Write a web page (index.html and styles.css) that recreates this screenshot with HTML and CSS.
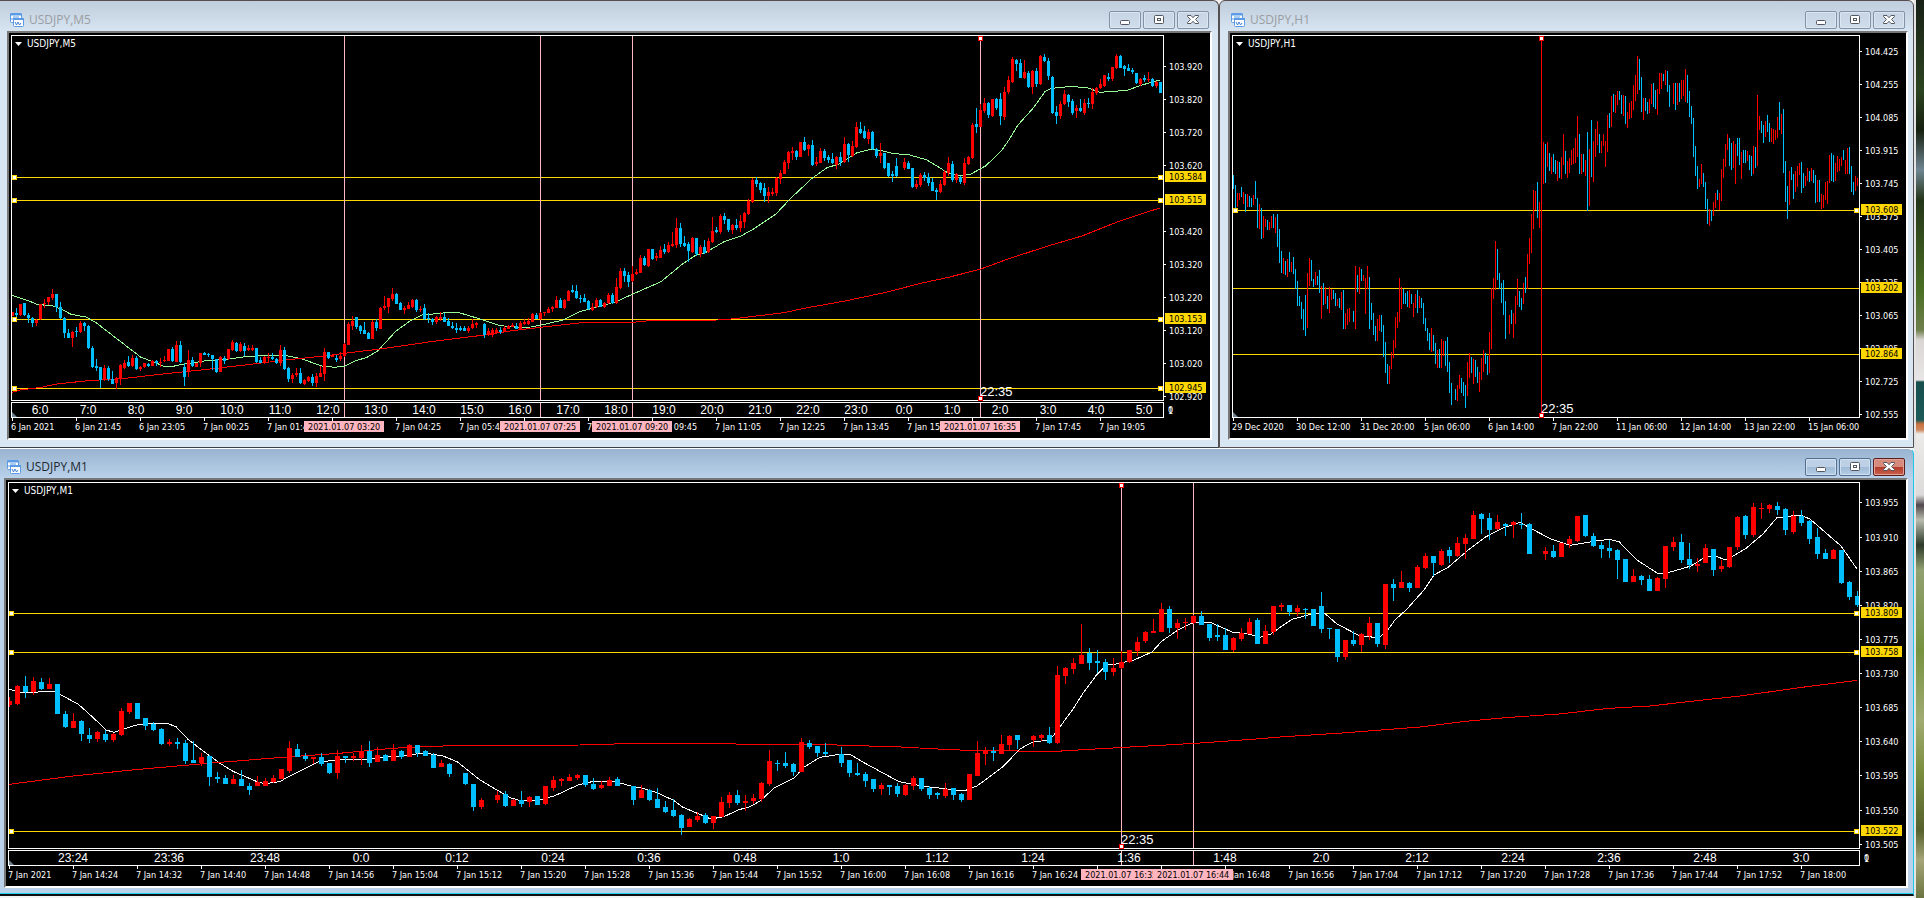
FILE: index.html
```html
<!DOCTYPE html>
<html lang="en">
<head>
<meta charset="utf-8">
<title>USDJPY charts</title>
<link rel="stylesheet" href="styles.css">
</head>
<body>
<svg class="sprite" aria-hidden="true">
  <symbol id="i-chart" viewBox="0 0 16 16">
    <rect x="1.5" y="1.5" width="11" height="9" rx="1" fill="#fff" stroke="#5b9be6"/>
    <path d="M1 2.5h12" stroke="#5b9be6" stroke-width="2"/>
    <path d="M3 8V6M5 7V4M7 6V4M9 6V4" stroke="#5b9be6"/>
    <rect x="4.5" y="6.5" width="10" height="8" rx="1" fill="#fff" stroke="#5b9be6"/>
    <path d="M4 7h11" stroke="#5b9be6" stroke-width="2"/>
    <path d="M6 10l1.500 3 1.500-3 1.500 3 1.500-2" fill="none" stroke="#3f7fd6"/>
  </symbol>
  <symbol id="i-min" viewBox="0 0 12 12">
    <rect x="1.500" y="6.500" width="9" height="4" rx="1" fill="#fff" stroke="#53565f"/>
  </symbol>
  <symbol id="i-max" viewBox="0 0 12 12">
    <rect x="1.500" y="1.500" width="9" height="8" rx="1" fill="#fff" stroke="#53565f"/>
    <rect x="4.500" y="4.500" width="3" height="2" fill="#fff" stroke="#53565f"/>
  </symbol>
  <symbol id="i-close" viewBox="0 0 12 12">
    <path d="M.5 1.500h3.500L6 3.700 8 1.500h3.500v1L8.500 5.500l3 3v1H8L6 7.300 4 9.500H.5v-1l3-3-3-3z" fill="#fff" stroke="#53565f"/>
  </symbol>
</svg>
<div class="desktop">
  <main class="workspace">
    <section class="window window-m5" aria-label="USDJPY,M5">
      <header class="titlebar">
        <svg class="app-icon" aria-hidden="true"><use href="#i-chart"/></svg>
        <h2 class="title">USDJPY,M5</h2>
        <button class="win-btn" type="button" aria-label="Minimize"><svg class="glyph"><use href="#i-min"/></svg></button>
        <button class="win-btn" type="button" aria-label="Maximize"><svg class="glyph"><use href="#i-max"/></svg></button>
        <button class="win-btn" type="button" aria-label="Close"><svg class="glyph"><use href="#i-close"/></svg></button>
      </header>
      <div class="chart-frame"><svg class="chart" id="m5" role="img" aria-label="USDJPY five minute chart"></svg></div>
    </section>
    <section class="window window-h1" aria-label="USDJPY,H1">
      <header class="titlebar">
        <svg class="app-icon" aria-hidden="true"><use href="#i-chart"/></svg>
        <h2 class="title">USDJPY,H1</h2>
        <button class="win-btn" type="button" aria-label="Minimize"><svg class="glyph"><use href="#i-min"/></svg></button>
        <button class="win-btn" type="button" aria-label="Maximize"><svg class="glyph"><use href="#i-max"/></svg></button>
        <button class="win-btn" type="button" aria-label="Close"><svg class="glyph"><use href="#i-close"/></svg></button>
      </header>
      <div class="chart-frame"><svg class="chart" id="h1" role="img" aria-label="USDJPY hourly chart"></svg></div>
    </section>
    <section class="window window-m1 active" aria-label="USDJPY,M1">
      <header class="titlebar">
        <svg class="app-icon" aria-hidden="true"><use href="#i-chart"/></svg>
        <h2 class="title">USDJPY,M1</h2>
        <button class="win-btn" type="button" aria-label="Minimize"><svg class="glyph"><use href="#i-min"/></svg></button>
        <button class="win-btn" type="button" aria-label="Maximize"><svg class="glyph"><use href="#i-max"/></svg></button>
        <button class="win-btn win-close" type="button" aria-label="Close"><svg class="glyph"><use href="#i-close"/></svg></button>
      </header>
      <div class="chart-frame"><svg class="chart" id="m1" role="img" aria-label="USDJPY one minute chart"></svg></div>
    </section>
  </main>
  <aside class="wallpaper" aria-hidden="true"></aside>
</div>
<script src="charts.js"></script>
</body>
</html>
```
FILE: styles.css
```css
* { box-sizing: border-box; }

body {
  margin: 0;
  background: #f4f4f4;
  font-family: "Open Sans", "Noto Sans", sans-serif;
}

.sprite { position: absolute; width: 0; height: 0; }

.desktop {
  display: grid;
  grid-template-columns: 1fr 10px;
  height: 100vh;
  min-height: 480px;
}

.workspace {
  display: grid;
  grid-template-columns: 1219fr 695fr;
  grid-template-rows: 1fr 1fr;
  min-width: 0;
  padding-bottom: 2px;
}

.window {
  display: flex;
  flex-direction: column;
  min-width: 0;
  min-height: 0;
  border-top: 1px solid #55504f;
  border-bottom: 1px solid #3a3f45;
  background: linear-gradient(#bfcddc, #d8e5f2 31px);
}

.window-m5 {
  padding: 0 6px 7px 7px;
  border-right: 1px solid #55504f;
  border-radius: 0 6px 0 0;
}

.window-h1 {
  padding: 0 5px 7px 8px;
  border: 1px solid #55504f;
  border-radius: 6px 6px 0 0;
}

.window-m1 {
  grid-column: 1 / -1;
  padding: 0 5px 6px 4px;
  border-top-color: #fff;
  border-right: 1px solid #20c8e8;
  border-bottom: 2px solid #111;
  border-radius: 0 6px 0 0;
  box-shadow: inset 0 -1px #20d0f0;
  background: linear-gradient(#99b4d1, #b9d1ea 29px);
}

.titlebar {
  display: flex;
  flex: none;
  align-items: center;
  gap: 2px;
  height: 30px;
  padding: 7px 3px 0 2px;
}

.window-m1 .titlebar { height: 29px; padding-top: 6px; }

.app-icon { flex: none; width: 16px; height: 16px; }

.title {
  flex: 1;
  margin: 0 0 0 2px;
  font-size: 12px;
  line-height: 16px;
  font-weight: 400;
  color: #9a9da1;
}

.active .title { color: #23282e; }

.win-btn {
  display: flex;
  align-items: center;
  justify-content: center;
  width: 32px;
  height: 18px;
  padding: 0;
  border: 1px solid #8391a7;
  border-radius: 2px;
  box-shadow: inset 0 0 0 1px #dbe6f1;
  background: linear-gradient(#c6d4e3, #cfdceb);
}

.active .win-btn {
  border-color: #55708f;
  box-shadow: inset 0 0 0 1px #cfe0f1;
  background: linear-gradient(#bdd0e5 50%, #9fbad6 50%, #b4cde6);
}

.active .win-close {
  border-color: #5a1f1c;
  box-shadow: inset 0 0 0 1px #e2a196;
  background: linear-gradient(#d58a7c 50%, #b3392b 50%, #c9614c);
}

.glyph { width: 12px; height: 12px; }

.chart-frame {
  flex: 1;
  min-height: 0;
  border: 2px solid #fff;
  border-top-color: #777;
  border-left-color: #777;
  background: #000;
}

.chart { display: block; width: 100%; height: 100%; }

.chart text { font: 9px "DejaVu Sans Condensed", "Noto Sans", sans-serif; fill: #fff; }
.chart .name { font-size: 10px; }
.chart .on-tag { fill: #000; }
.chart .hour { font: 12px "Liberation Sans", Arial, sans-serif; text-anchor: middle; }
.chart .clock { font: 13px "Liberation Sans", Arial, sans-serif; }

.wallpaper {
  border-left: 2px solid #e4e4e4;
  background: linear-gradient(#182016, #2c4420 90px, #16200f 130px, #6f8693 170px, #243518 200px, #4a6f24 290px, #6f7f4c 330px, #d9d6d4 340px, #e8e6e6 380px, #174f4d 382px, #1c5a58 420px, #c9713d 424px, #d08a60 430px, #ecebe9 434px, #dcdada 495px, #50474c 505px, #b9bcae 520px, #2c3a2a 545px, #91a070 570px, #76923f 650px, #a0ab72 720px, #7c8f3f 770px, #55602c 830px, #a5a578 860px, #6b7440);
}
```
FILE: charts.js
```js
// Candle rows: direction, high, body top, body bottom, low ("-" is a missing bar).
// H1 rows hold only high and low. Values are in thirds of a pixel from `top`.
const M5_BARS = `r 937 937 948 948,b 925 940 945 950,r 912 912 945 948,b 908 910 944 948,b 940 944 955 968,b 950 953 970 980,r 958 960 970 977,r 911 911 957 960,r 897 908 913 925,r 890 891 907 915,r 867 882 895 900,b 882 882 922 935,b 905 920 955 957,b 952 955 998 1013,b 987 998 1013 1013,r 993 997 1013 1040,b 980 992 997 1010,r 963 970 997 1000,b 966 970 977 992,b 975 977 1045 1047,b 1038 1043 1100 1103,b 1077 1098 1104 1112,b 1100 1101 1141 1165,r 1095 1104 1138 1142,b 1098 1104 1138 1143,b 1113 1137 1151 1152,r 1132 1135 1150 1168,r 1092 1095 1137 1155,r 1080 1090 1103 1107,b 1068 1087 1098 1101,r 1065 1075 1098 1102,b 1068 1073 1107 1110,r 1098 1100 1107 1112,r 1090 1090 1100 1104,b 1088 1092 1098 1100,r 1080 1082 1097 1098,b 1080 1083 1090 1098,r 1075 1085 1090 1100,r 1068 1080 1084 1085,r 1047 1047 1082 1083,b 1040 1047 1082 1085,r 1022 1035 1085 1086,b 1023 1036 1086 1088,b 1090 1101 1131 1158,r 1050 1080 1112 1130,b 1072 1080 1098 1100,r 1088 1088 1100 1102,r 1058 1058 1090 1100,b 1055 1060 1064 1064,b 1060 1062 1066 1072,b 1064 1066 1078 1110,b 1078 1078 1115 1120,r 1068 1071 1115 1116,b 1067 1073 1082 1092,r 1047 1047 1078 1080,r 1020 1027 1050 1053,b 1025 1028 1052 1056,r 1027 1033 1052 1056,b 1030 1037 1052 1068,r 1035 1045 1050 1053,r 1035 1043 1050 1053,b 1043 1045 1087 1088,b 1070 1080 1088 1088,r 1068 1071 1090 1091,r 1058 1070 1074 1090,b 1060 1072 1077 1080,b 1073 1076 1088 1091,r 1035 1050 1090 1098,b 1040 1050 1107 1110,b 1101 1104 1137 1145,r 1120 1124 1137 1148,r 1105 1118 1126 1130,b 1105 1119 1148 1152,r 1137 1140 1153 1155,r 1127 1131 1143 1145,b 1122 1132 1148 1157,r 1120 1127 1148 1161,r 1098 1119 1130 1132,r 1044 1056 1122 1143,b 1055 1056 1073 1078,r 1063 1066 1070 1070,b 1065 1074 1080 1087,r 1055 1068 1078 1083,r 1030 1032 1068 1072,r 967 971 1034 1036,r 948 962 978 990,b 950 951 980 988,b 975 978 992 1003,b 965 990 1003 1003,b 995 999 1016 1017,r 960 965 1017 1017,b 958 967 985 992,r 920 924 987 988,r 888 918 923 930,r 893 895 921 940,r 863 882 897 903,b 879 882 911 912,b 905 909 930 931,r 918 924 930 942,r 905 915 926 927,r 898 900 921 925,b 898 900 930 937,r 918 927 930 935,b 912 924 957 960,b 940 953 958 968,b 953 956 967 975,r 947 951 967 972,r 935 950 957 963,b 940 950 965 967,b 955 963 978 979,b 965 977 985 988,b 970 983 990 1000,b 978 985 991 993,b 978 985 993 993,r 978 984 993 998,r 958 971 985 987,r 965 968 975 985,-,b 970 972 1005 1015,r 984 992 1004 1008,r 985 990 1005 1010,r 983 990 998 1002,b 980 990 995 1003,r 978 983 995 996,r 975 978 986 988,r 970 974 980 982,b 970 978 986 988,r 963 968 988 990,r 957 966 972 976,r 953 963 972 975,r 940 942 965 966,b 938 945 957 958,r 937 940 957 960,r 935 936 940 948,r 920 926 938 940,r 918 922 928 935,r 888 899 923 925,b 895 900 923 925,r 898 900 924 926,r 870 873 902 904,b 855 870 876 880,b 855 872 894 897,b 885 893 898 910,b 882 895 905 907,b 900 903 928 930,r 908 920 930 932,r 893 900 922 925,b 898 900 920 922,r 905 908 920 923,r 880 884 910 913,b 880 885 908 912,r 835 862 908 912,r 803 813 865 867,b 803 813 828 845,b 815 825 845 860,r 797 822 843 845,r 807 815 822 825,r 765 773 818 820,b 767 773 796 797,r 746 746 797 802,b 747 747 777 780,r 758 768 774 783,r 737 750 773 773,b 733 748 755 762,r 725 735 755 758,r 697 732 738 742,r 653 683 735 745,b 668 683 731 742,b 707 730 737 740,b 725 733 753 785,r 710 715 755 760,b 713 715 762 767,r 735 741 763 770,b 720 740 758 763,r 713 723 757 758,r 651 692 726 730,b 680 689 697 700,r 642 648 697 702,b 638 648 660 672,b 657 657 690 697,r 671 676 690 702,b 657 675 685 690,r 645 663 685 695,r 635 640 665 685,r 598 602 641 645,r 535 540 607 608,b 530 540 553 560,b 545 548 570 578,b 550 565 588 607,r 562 577 588 608,r 565 577 583 588,r 530 535 580 587,r 510 518 538 551,r 480 487 521 523,r 453 457 489 508,r 442 454 460 480,b 451 454 470 480,r 425 427 470 472,b 410 427 451 453,r 432 435 447 467,b 420 435 494 497,r 470 486 493 498,r 445 453 490 490,b 448 454 474 482,b 465 472 480 490,b 460 477 490 493,r 468 471 495 508,b 455 470 485 497,r 411 432 485 488,b 428 432 465 485,r 423 437 467 472,r 365 382 440 445,b 367 387 400 402,b 378 392 415 418,r 388 395 417 431,b 393 395 448 450,b 445 448 468 475,r 428 460 468 488,b 458 460 505 507,b 488 490 527 532,b 513 522 528 545,b 475 497 527 530,-,r 473 486 503 510,b 483 489 507 508,b 503 505 562 565,r 540 552 562 567,r 520 525 555 560,b 515 525 535 542,b 520 530 548 558,b 535 547 572 573,b 563 570 575 600,r 540 552 577 578,r 510 517 555 558,r 470 490 520 527,b 483 492 540 547,r 518 522 540 550,b 528 530 547 552,r 475 490 548 555,r 467 471 493 495,r 368 376 473 478,b 323 372 380 398,r 311 330 381 382,r 293 308 332 340,b 305 310 345 353,r 297 297 347 352,b 293 297 323 330,b 280 298 348 375,r 262 275 350 360,r 227 240 275 282,r 172 178 245 250,b 177 180 192 213,b 178 188 233 235,r 180 217 235 237,b 212 218 262 263,r 210 212 262 282,b 203 213 252 262,r 165 168 253 255,b 162 170 183 187,b 173 182 228 240,b 227 230 340 342,b 318 335 348 372,r 302 312 348 358,r 270 283 312 315,b 283 285 305 320,b 297 303 338 345,r 315 323 333 353,b 297 323 333 337,r 298 310 340 345,b 293 308 313 325,r 265 277 312 328,r 260 264 280 285,r 237 253 264 267,r 225 225 258 262,b 218 230 237 242,r 200 202 237 242,r 162 168 205 207,b 165 168 203 205,b 195 198 206 228,b 192 203 213 213,b 203 210 215 223,b 218 220 250 252,r 235 237 252 257,b 225 235 240 245,r 215 237 240 245,b 235 237 257 262,r 243 247 258 264,b 245 246 278 280`;

const M1_BARS = `r 770 783 795 800,r 735 738 791 795,b 708 738 755 773,r 711 723 756 765,b 715 726 747 750,r 713 732 747 748,b 732 732 822 822,b 813 822 861 864,r 820 843 863 864,b 840 843 882 903,b 865 885 897 908,r 873 876 897 905,b 870 882 900 906,r 880 882 900 905,r 804 813 885 888,r 789 789 816 822,b 789 789 836 837,b 834 835 858 869,b 846 851 869 873,b 865 867 912 915,r 898 906 912 917,b 895 906 912 927,b 900 909 963 971,b 903 960 969 970,r 940 950 969 977,b 946 948 1011 1037,b 995 1011 1017 1028,b 1005 1014 1032 1032,r 1005 1017 1032 1033,b 990 1017 1038 1038,b 1030 1038 1050 1064,r 1008 1026 1037 1039,r 1014 1023 1037 1038,r 1005 1014 1026 1028,r 987 987 1017 1018,r 903 924 993 998,b 912 927 951 951,b 940 948 958 963,r 950 951 958 972,b 940 951 972 977,b 968 969 999 1002,r 930 948 999 1017,b 948 948 954 968,r 940 948 954 962,r 915 933 954 975,b 903 933 969 980,r 920 945 966 967,b 941 945 962 963,r 912 930 963 964,b 930 933 951 957,r 912 915 951 952,b 915 915 938 950,b 930 933 948 949,b 940 945 984 985,r 960 969 981 982,b 970 972 1002 1011,-,b 998 999 1032 1034,b 1032 1032 1102 1112,r 1074 1080 1102 1106,-,r 1053 1065 1080 1088,b 1053 1062 1098 1100,r 1076 1080 1098 1098,b 1053 1080 1092 1101,r 1068 1071 1085 1101,b 1068 1068 1095 1095,r 1037 1038 1092 1095,r 1008 1020 1044 1053,r 1013 1017 1022 1037,r 1001 1011 1022 1024,r 1001 1005 1014 1019,b 1005 1005 1035 1040,b 1014 1032 1047 1050,r 1024 1035 1044 1046,r 1011 1020 1038 1038,b 1011 1017 1038 1038,-,b 1038 1038 1080 1094,r 1035 1049 1074 1074,b 1047 1050 1080 1083,b 1044 1077 1104 1104,b 1083 1101 1116 1119,b 1077 1110 1128 1131,b 1122 1125 1164 1185,r 1133 1137 1161 1162,r 1116 1128 1140 1146,b 1119 1125 1149 1151,r 1128 1129 1149 1167,r 1071 1086 1131 1132,r 1055 1065 1089 1104,b 1050 1065 1089 1095,r 1065 1083 1089 1112,r 1062 1074 1083 1092,r 1026 1029 1077 1085,r 930 963 1032 1038,b 960 968 972 992,b 936 969 978 984,b 969 972 996 1008,r 894 906 996 996,b 900 909 921 927,b 918 918 939 951,b 909 936 942 948,-,b 921 942 969 980,b 960 960 999 1011,b 969 999 1005 1007,b 995 1002 1023 1041,b 1017 1017 1047 1056,r 1029 1035 1047 1065,b 1036 1036 1041 1065,b 1028 1038 1062 1071,r 1033 1035 1065 1068,r 1008 1014 1038 1050,b 1014 1014 1047 1053,b 1038 1044 1065 1077,b 1056 1059 1065 1077,r 1029 1047 1068 1074,b 1044 1044 1065 1080,b 1060 1062 1080 1086,r 1002 1002 1080 1080,r 903 939 1008 1008,r 921 933 942 975,b 921 933 939 963,r 885 912 942 942,r 885 888 915 930,b 885 885 900 927,-,r 885 888 900 921,r 882 885 894 902,b 861 885 909 911,r 678 705 909 912,r 681 684 708 732,r 654 669 687 702,r 552 645 672 672,b 624 639 669 690,b 630 663 669 699,b 657 666 696 720,r 654 684 696 708,r 633 666 684 686,r 630 630 666 669,r 591 606 633 648,r 573 576 603 609,r 537 573 579 580,r 489 507 576 576,b 498 507 564 579,r 537 549 564 597,r 534 546 550 570,r 525 528 549 552,b 513 528 555 555,b 552 552 594 602,b 552 585 591 602,b 564 585 630 630,r 591 594 630 636,r 564 579 597 602,r 534 546 582 582,b 534 540 612 612,r 555 573 612 612,r 498 498 576 585,r 489 495 501 512,b 495 495 516 527,r 495 504 516 527,b 504 507 510 537,b 507 507 558 558,b 456 498 567 579,b 564 564 567 597,b 567 567 651 666,r 600 600 651 660,b 573 600 612 618,r 579 582 615 636,r 531 549 588 600,b 549 549 612 621,r 432 432 615 627,b 417 432 444 483,r 393 426 444 444,b 426 429 444 456,r 375 381 444 444,r 339 348 384 387,b 348 348 369 408,r 327 333 375 378,b 321 330 348 369,r 291 309 348 351,r 282 294 312 357,r 213 225 297 298,b 219 222 237 282,b 219 234 270 300,r 225 246 267 269,b 249 252 258 288,r 243 246 255 294,b 219 252 254 267,b 249 252 342 342,-,r 321 333 342 360,b 315 333 351 354,r 309 309 351 351,r 288 297 312 324,r 228 228 303 306,b 225 225 288 291,b 279 288 318 321,b 306 315 327 354,b 300 324 333 354,b 327 330 360 417,b 357 357 426 426,r 387 408 426 426,b 405 408 420 435,b 405 417 453 453,r 411 414 453 453,r 318 318 417 444,r 291 306 321 333,b 282 306 360 369,b 309 357 375 387,r 354 372 378 396,r 312 324 369 369,b 327 327 390 408,r 360 378 387 396,r 321 321 381 384,r 228 231 321 330,b 225 228 285 297,r 189 201 285 291,r 189 204 207 237,r 192 195 207 219,b 186 198 210 225,b 204 207 270 285,r 213 228 276 282,b 210 228 249 258,b 240 243 297 312,b 264 291 342 357,b 327 339 357 357,r 327 330 357 357,b 330 330 429 432,b 423 426 471 480,b 453 468 495 501`;

const H1_BARS_A = `b75 117,b105 175,r129 170,r129 150,b111 141,r126 162,b132 186,r132 170,b138 171,b144 171,r135 165,b93 147,b144 234,r162 237,b174 267,r198 264,r207 231,b210 240,r216 240,r198 234,b192 234,r201 249,b192 291,b237 339,b303 369,r324 372,b333 375,r327 381,b306 366,r336 366,b321 372,b357 417,b393 468,b438 468,b456 507,b477 540,b435 558,r369 534,r324 408,b330 393,b387 411,r366 405,b378 405,b360 429,r408 507,b399 465,r411 462,b438 477,r411 489,r417 450,b420 447,b429 468,r447 468,b444 474,r426 480,b420 537,r489 537,r477 525,r474 516,-,b483 516,r348 537,b375 426,r351 432,b357 393,r375 393,r384 492,r348 417,b381 537,b459 510,b489 555,b528 573,r507 573,r495 543,b495 546,b525 621,b576 669,b642 702,r648 702,r606 657,r570 624,r501 594,r486 534,r384 516,r411 477,b417 462,b429 462,b423 471,r420 474,b432 462,r459 501,r432 474,b420 489,r438 474,b444 474,b459 522,b504 543,b534 573,b549 600,r534 606,b555 603,b579 642,r600 654,b597 654,r567 654,r573 618,b573 648,b561 666,b636 729,b699 765,-,b717 750,r705 753,r675 717,b684 729,b696 738,b705 774,r636 738,r609 684,b621 669,r627 702,b630 681,b651 699,r666 726,r624 690,r600 666,b609 642,b618 675,r546 669,r414 597,r384 447,r273 420,b297 390,b369 417,b399 459,b390 495,b453 567,-,r495 552,b480 522,r489 564,r438 522,r387 465,b423 471,b444 480,r399 462,b381 429,r312 417,r264 342,r192 309,r120 237,r123 180,b96 204,r156 234`;
const H1_BARS_B = `r306 432,b312 429,r306 381,b339 393,r351 402,b342 396,b360 402,r363 423,b366 414,r351 417,r282 375,b333 402,r363 414,r354 399,r330 375,r324 372,r294 369,r228 351,b282 402,r342 402,b342 396,r360 408,b276 513,r327 498,b240 411,r303 426,r267 351,r243 315,b282 339,r303 339,r282 318,r303 381,r225 336,b219 264,r168 261,b162 216,r165 219,r153 195,b153 180,b165 222,r165 228,b168 252,r216 264,r189 237,r183 234,r135 210,r105 183,r48 162,b57 150,b111 216,r174 240,b174 213,b186 222,r177 219,r132 192,b129 201,b150 207,r147 225,r99 162,r99 147,b102 123,r90 135,b93 156,b135 201,-,r129 192,b129 210,r129 195,b129 186,r120 177,r120 168,r87 186,b105 189,b153 231,b198 252,b234 351,b318 408,b378 447,r417 441,r372 432,b399 441,b426 507,b477 552,r507 558,b510 543,r486 528,r459 504,b450 480,r459 510,r387 483,r357 414,r312 381,r282 330,b294 378,b309 390,r303 384,r312 432,b294 348,b294 375,r336 417,b330 369,b330 369,r333 363,b345 390,b348 408,r318 402,b321 384,r165 378,r228 270,b243 279,b255 309,r243 291,b225 276,b249 306,r264 306,r267 312,r270 300,r231 294,b186 270,r222 282,b207 399,b363 486,b438 537,r393 495,b381 420,b402 477,r393 456,r378 441,r369 405,b366 459,b399 444,r408 438,r384 423,b393 426,r384 423,b390 429,b405 489,r420 486,b420 486,r462 507,r465 504,r426 480,r423 492,r345 429,b339 423,b345 426,r369 423,r348 396,r357 393,r351 378,b330 360,r360 402,r324 402,b321 402,b378 456,b426 465,r408 453,r414 438`;

const M5_GREEN = `12 886,29 903,37 913,53 918,61 927,71 943,86 951,96 968,141 1072,153 1085,164 1099,173 1099,182 1093,194 1088,208 1081,224 1079,245 1070,265 1067,286 1067,300 1075,322 1098,335 1102,345 1098,355 1083,367 1072,378 1052,396 993,410 963,422 945,433 942,449 937,459 938,478 955,500 977,518 982,531 981,543 974,563 960,580 935,592 925,608 912,616 905,633 882,661 845,682 793,696 765,706 757,724 725,741 708,753 688,776 642,790 597,812 535,827 503,839 492,857 458,871 448,882 452,892 460,910 465,927 480,939 502,947 517,961 528,971 522,986 497,1002 450,1010 415,1018 375,1033 325,1045 275,1051 265,1069 260,1086 262,1100 277,1127 271,1139 258,1151 247,1160 240`;
const M5_RED = `12 1177,20 1170,41 1162,57 1152,88 1142,122 1136,163 1122,204 1109,245 1095,286 1080,327 1067,347 1059,380 1047,408 1035,433 1024,482 1006,510 993,543 981,582 968,633 967,649 962,718 960,735 956,751 950,784 938,804 925,845 903,886 877,922 849,947 833,980 808,1008 777,1049 737,1082 708,1118 665,1143 640,1160 624`;
const M1_WHITE = `9 748,24 759,53 753,61 765,78 792,94 835,106 870,114 877,135 856,147 850,167 850,176 860,188 898,204 935,220 970,233 994,257 1025,265 1031,280 1025,286 1014,318 966,339 960,367 958,384 952,400 948,416 942,429 941,443 948,457 965,480 1020,510 1073,522 1083,539 1080,555 1067,578 1035,592 1025,616 1025,629 1037,640 1043,656 1057,673 1080,683 1102,711 1137,724 1130,738 1110,750 1100,760 1083,775 1042,795 1012,803 983,820 952,840 943,850 943,864 968,899 1025,922 1038,964 1053,977 1038,1003 980,1020 927,1032 907,1048 900,1054 885,1073 807,1083 760,1097 703,1107 674,1115 673,1134 660,1152 636,1162 603,1177 572,1191 550,1203 546,1211 548,1232 576,1248 582,1260 592,1271 582,1280 562,1292 538,1313 521,1325 521,1337 552,1360 588,1379 593,1387 573,1395 540,1407 507,1424 450,1434 405,1448 382,1469 328,1485 292,1502 265,1520 247,1535 272,1551 297,1570 316,1596 303,1609 298,1619 305,1637 360,1658 401,1668 398,1691 378,1707 348,1715 348,1726 360,1732 350,1746 325,1763 282,1777 233,1800 225,1810 237,1841 318,1857 387`;
const M1_RED = `9 1033,73 1008,139 988,208 970,282 952,339 940,392 925,424 920,453 917,498 918,531 916,580 915,637 910,709 911,762 913,816 913,901 921,950 929,979 932,1056 934,1101 926,1154 917,1195 910,1252 898,1280 891,1342 879,1420 861,1465 844,1510 832,1559 822,1609 805,1650 798,1691 784,1740 768,1802 742,1857 721`;

const COLORS = { r: "#ff0000", b: "#00bfff" };
const NS = "http://www.w3.org/2000/svg";

const minuteLabels = (start, step, count, day) =>
  Array.from({ length: count }, (_, k) => {
    const t = start + k * step;
    const pad = n => String(n).padStart(2, "0");
    return `${day(t)} Jan ${pad(Math.floor(t / 60) % 24)}:${pad(t % 60)}`;
  });

const hours = (start, step, count) =>
  Array.from({ length: count }, (_, k) => {
    const t = start + k * step;
    return `${Math.floor(t / 60) % 24}:${t % 60}`;
  });

const charts = {
  m5: {
    name: "USDJPY,M5", base: [1201, 405], left: 9, top: 99, step: 4, body: 3,
    bars: [{ from: 0, top: 99, rows: M5_BARS }],
    averages: [["#98fb98", M5_GREEN], ["#ff0000", M5_RED]],
    prices: [["103.920", 199], ["103.820", 298], ["103.720", 397], ["103.620", 496], ["103.420", 694], ["103.320", 793], ["103.220", 892], ["103.120", 991], ["103.020", 1090], ["102.920", 1190]],
    levels: [["103.584", 532, 1], ["103.515", 601, 1], ["103.153", 958, 1], ["102.945", 1165, 1]],
    marks: [[83, "2021.01.07 03:20"], [132, "2021.01.07 07:25"], [155, "2021.01.07 09:20"], [242, "2021.01.07 16:35", 1]],
    lineColor: "#ffb6c1", clockIndex: 242,
    dates: ["6 Jan 2021", ...minuteLabels(1305, 80, 17, t => (t < 1440 ? 6 : 7))],
    hours: hours(360, 60, 24), hourStart: 31, hourStep: 48
  },
  h1: {
    name: "USDJPY,H1", base: [676, 405], left: 1230, top: 99, step: 2, body: 1,
    bars: [{ from: 0, top: -351, rows: H1_BARS_A }, { from: 155, top: -21, rows: H1_BARS_B }],
    averages: [],
    prices: [["104.425", 155], ["104.255", 254], ["104.085", 353], ["103.915", 452], ["103.745", 551], ["103.575", 650], ["103.405", 749], ["103.235", 848], ["103.065", 947], ["102.895", 1046], ["102.725", 1145], ["102.555", 1243]],
    levels: [["103.608", 631, 1], ["103.202", 865, 0], ["102.864", 1063, 0]],
    marks: [[154, "", 1]],
    lineColor: "#ff0000", clockIndex: 154,
    dates: ["29 Dec 2020", "30 Dec 12:00", "31 Dec 20:00", "5 Jan 06:00", "6 Jan 14:00", "7 Jan 22:00", "11 Jan 06:00", "12 Jan 14:00", "13 Jan 22:00", "15 Jan 06:00"]
  },
  m1: {
    name: "USDJPY,M1", base: [1900, 406], left: 6, top: 120, step: 8, body: 5,
    bars: [{ from: 0, top: 120, rows: M1_BARS }],
    averages: [["#ffffff", M1_WHITE], ["#ff0000", M1_RED]],
    prices: [["103.955", 188], ["103.910", 292], ["103.865", 394], ["103.820", 496], ["103.775", 598], ["103.730", 700], ["103.685", 802], ["103.640", 904], ["103.595", 1006], ["103.550", 1111], ["103.505", 1213]],
    levels: [["103.809", 520, 1], ["103.758", 637, 1], ["103.522", 1174, 1]],
    marks: [[139, "2021.01.07 16:35", 1], [148, "2021.01.07 16:44"]],
    lineColor: "#ffb6c1", clockIndex: 139,
    dates: ["7 Jan 2021", ...minuteLabels(864, 8, 28, () => 7)],
    hours: hours(1404, 12, 19), hourStart: 67, hourStep: 96
  }
};

function draw(id) {
  const c = charts[id];
  const svg = document.getElementById(id);
  const W = Math.round(svg.getBoundingClientRect().width);
  const H = Math.round(svg.getBoundingClientRect().height);
  svg.replaceChildren();

  const add = (tag, attrs, text, parent = svg) => {
    const el = document.createElementNS(NS, tag);
    for (const k in attrs) el.setAttribute(k, attrs[k]);
    if (text !== undefined) el.textContent = text;
    parent.append(el);
    return el;
  };
  const rect = (x, y, width, height, fill, parent) =>
    add("rect", { x, y, width: Math.max(0, width), height: Math.max(1, height), fill }, undefined, parent);

  const left = 2, top = 2, right = W - 47, axis = H - 21;
  const floor = c.hours ? H - 38 : axis;
  const sx = W / c.base[0], sy = H / c.base[1];
  const X = x => Math.round(x * sx);
  const barX = i => X(3 + i * c.step);
  const edge = (v, t) => Math.round((v - t) / 3 * sy);
  const row = v => Math.floor((v - c.top) / 3 * sy);

  const clip = add("clipPath", { id: id + "-clip" });
  rect(left + 1, top + 1, right - left - 1, floor - top - 1, "#000", clip);
  const plot = add("g", { "clip-path": `url(#${id}-clip)`, "shape-rendering": "crispEdges" });

  for (const [, v] of c.levels) rect(left, row(v), right - left, 1, "#ffd700", plot);
  for (const [i] of c.marks) {
    rect(barX(i), top, 1, floor - top, c.lineColor, plot);
    if (c.hours) rect(barX(i), floor + 3, 1, axis - floor - 3, c.lineColor);
  }
  for (const [color, pts] of c.averages) {
    const points = pts.split(",").map(p => {
      const [x, y] = p.split(" ").map(Number);
      return `${(x - c.left) * sx},${(y - c.top) / 3 * sy}`;
    }).join(" ");
    add("polyline", { points, fill: "none", stroke: color }, undefined, plot);
  }
  for (const part of c.bars) {
    part.rows.split(",").forEach((r, k) => {
      if (r === "-") return;
      const n = r.slice(1).trim().split(" ").map(Number);
      const x = barX(part.from + k), color = COLORS[r[0]];
      const hi = edge(n[0], part.top), lo = edge(n[n.length - 1], part.top);
      rect(x, hi, 1, lo - hi, color, plot);
      if (n.length === 4) {
        const a = edge(n[1], part.top);
        rect(x - (c.body - 1) / 2, a, c.body, edge(n[2], part.top) - a, color, plot);
      }
    });
  }

  // Frames
  const box = (y0, y1) => add("rect", { x: left + 0.5, y: y0 + 0.5, width: right - left, height: y1 - y0, fill: "none", stroke: "#fff" });
  box(top, floor);
  if (c.hours) box(floor + 2, axis);
  add("path", { d: `M${left + 1} ${axis - 5}l5 5h-5z`, fill: "#708090" });

  // Selection handles
  const handle = (x, y, color) => { rect(x - 2, y - 2, 5, 5, color); rect(x - 1, y - 1, 3, 3, "#fff"); };
  for (const [, v, selected] of c.levels) {
    if (selected) { handle(left + 3, row(v), "#ffd700"); handle(right - 3, row(v), "#ffd700"); }
  }
  for (const [i, , selected] of c.marks) {
    if (selected) { handle(barX(i), top + 3, "#ff0000"); handle(barX(i), floor - 2, "#ff0000"); }
  }
  add("text", { x: barX(c.clockIndex), y: floor - 4, class: "clock" }, "22:35");

  // Price scale
  for (const [label, v] of c.prices) {
    rect(right + 1, row(v), 2, 1, "#fff");
    add("text", { x: right + 6, y: row(v) + 4 }, label);
  }
  for (const [label, v] of c.levels) {
    rect(right + 2, row(v) - 6, 41, 11, "#ffd700");
    add("text", { x: right + 6, y: row(v) + 3, class: "on-tag" }, label);
  }

  // Time scale; a label that a marker tag would cover completely is left out
  c.dates.forEach((label, k) => {
    const x = X(3 + 64 * k);
    rect(x, axis + 1, 1, 3, "#fff");
    const covered = c.marks.some(([i, tag]) => tag && x > barX(i) - 40 && x + 47 < barX(i) + 40);
    if (!covered) add("text", { x: x - 1, y: H - 8 }, label);
  });
  for (const [i, label] of c.marks) {
    if (!label) continue;
    rect(barX(i) - 40, H - 17, 80, 11, "#ffb6c1");
    add("text", { x: barX(i) - 36, y: H - 8, class: "on-tag" }, label);
  }
  if (c.hours) {
    c.hours.forEach((label, k) => add("text", { x: X(c.hourStart + c.hourStep * k), y: H - 24, class: "hour" }, label));
    add("text", { x: right + 5, y: H - 25 }, "0");
    add("text", { x: right + 5, y: H - 24 }, "1");
  }

  add("path", { d: "M6 9h7l-3.500 4z", fill: "#fff" });
  add("text", { x: 18, y: 14, class: "name" }, c.name);
}

const drawAll = () => Object.keys(charts).forEach(draw);
window.addEventListener("resize", drawAll);
drawAll();
```
